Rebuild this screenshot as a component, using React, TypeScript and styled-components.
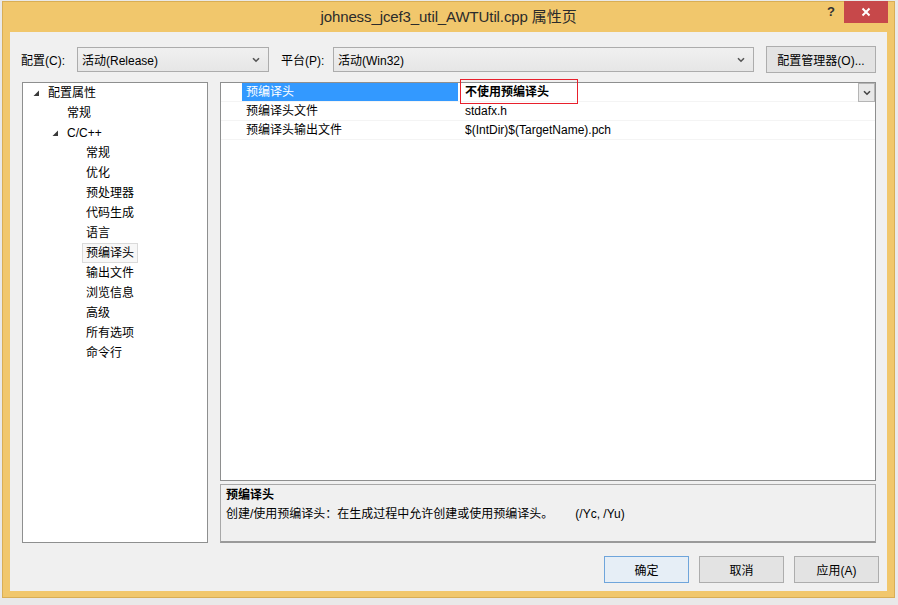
import React from "react";
import styled, { createGlobalStyle } from "styled-components";

const FONT = `"Liberation Sans", "Noto Sans CJK SC", sans-serif`;

const Global = createGlobalStyle`
  html, body { margin: 0; padding: 0; }
  body {
    width: 898px; height: 605px; overflow: hidden;
    background: #e9e9e9;
    font-family: ${FONT};
    font-size: 12px;
    color: #000;
  }
`;

const Page = styled.div`
  width: 898px;
  height: 605px;
  padding: 1px 0 0 2px;
  box-sizing: border-box;
`;

const Window = styled.div`
  width: 893px;
  height: 597px;
  background: #f1c76c;
  border: 1px solid #d9ae55;
  box-sizing: border-box;
  display: flex;
  flex-direction: column;
`;

const TitleBar = styled.div`
  height: 30px;
  flex: none;
  position: relative;
  display: flex;
  align-items: center;
  justify-content: center;
`;

const Title = styled.div`
  font-size: 15px;
  color: #2b2b2b;
  margin-top: -3px;
  letter-spacing: -0.1px;
`;

const Controls = styled.div`
  position: absolute;
  right: 6px;
  top: -1px;
  display: flex;
  align-items: flex-start;
`;

const HelpBtn = styled.div`
  width: 26px;
  height: 21px;
  display: flex;
  align-items: center;
  justify-content: center;
  font-weight: bold;
  font-size: 13px;
  color: #333;
`;

const CloseBtn = styled.div`
  width: 44px;
  height: 22px;
  background: #c7484a;
  display: flex;
  align-items: center;
  justify-content: center;
`;

const Client = styled.div`
  margin: 0 7px 6px 7px;
  flex: 1;
  background: #f0f0f0;
  display: flex;
  flex-direction: column;
  padding: 14px 11px 8px 12px;
  box-sizing: border-box;
`;

const TopRow = styled.div`
  height: 27px;
  display: flex;
  align-items: center;
  margin-left: -1px;
`;

const Label = styled.span<{ $w: number }>`
  width: ${(p) => p.$w}px;
  flex: none;
  white-space: nowrap;
`;

const Combo = styled.div<{ $w: number }>`
  width: ${(p) => p.$w}px;
  height: 25px;
  box-sizing: border-box;
  border: 1px solid #acacac;
  background: linear-gradient(#f0f0f0, #e6e6e6);
  display: flex;
  align-items: center;
  padding: 0 0 0 4px;
  flex: none;
`;

const ComboText = styled.span`
  flex: 1;
  white-space: nowrap;
`;

const Chevron = styled.svg`
  margin-right: 8px;
  flex: none;
`;

const Button = styled.div<{ $w: number; $default?: boolean }>`
  width: ${(p) => p.$w}px;
  height: 27px;
  box-sizing: border-box;
  border: 1px solid ${(p) => (p.$default ? "#6fa5db" : "#adadad")};
  background: ${(p) => (p.$default ? "#e6eef6" : "#e3e3e3")};
  display: flex;
  align-items: center;
  justify-content: center;
  flex: none;
  white-space: nowrap;
`;

const Panels = styled.div`
  margin-top: 9px;
  height: 461px;
  display: flex;
  gap: 12px;
`;

const Tree = styled.div`
  width: 186px;
  box-sizing: border-box;
  border: 1px solid #8e8f8f;
  background: #fff;
  flex: none;
`;

const TreeRow = styled.div<{ $level: number }>`
  height: 20px;
  display: flex;
  align-items: center;
  padding-left: ${(p) => 10 + p.$level * 19}px;
`;

const Expander = styled.div`
  width: 15px;
  flex: none;
  display: flex;
  align-items: center;
  padding-top: 1px;
`;

const TreeLabel = styled.span<{ $selected?: boolean }>`
  margin-left: -4px;
  height: 20px;
  line-height: 17px;
  padding: 1px 3px 0 3px;
  box-sizing: border-box;
  border: 1px solid ${(p) => (p.$selected ? "#dadada" : "transparent")};
  background: ${(p) => (p.$selected ? "#f7f7f7" : "transparent")};
  white-space: nowrap;
`;

const RightCol = styled.div`
  flex: 1;
  display: flex;
  flex-direction: column;
  gap: 3px;
  position: relative;
`;

const Grid = styled.div`
  height: 399px;
  box-sizing: border-box;
  border: 1px solid #8e8f8f;
  background: #fff;
  flex: none;
`;

const GridRow = styled.div`
  height: 19px;
  box-sizing: border-box;
  border-bottom: 1px solid #f4f4f4;
  display: flex;
  padding-left: 21px;
  line-height: 17px;
  position: relative;
`;

const NameCell = styled.div<{ $selected?: boolean }>`
  width: 216px;
  flex: none;
  padding: 1px 0 0 4px;
  box-sizing: border-box;
  background: ${(p) => (p.$selected ? "#3399ff" : "transparent")};
  color: ${(p) => (p.$selected ? "#fff" : "#000")};
  white-space: nowrap;
`;

const ValueCell = styled.div<{ $bold?: boolean }>`
  flex: 1;
  padding: 1px 0 0 7px;
  font-weight: ${(p) => (p.$bold ? "bold" : "normal")};
  white-space: nowrap;
`;

const DropBtn = styled.div`
  position: absolute;
  right: 0;
  top: 0;
  width: 17px;
  height: 19px;
  box-sizing: border-box;
  border: 1px solid #b5b5b5;
  background: #e8e8e8;
  display: flex;
  align-items: center;
  justify-content: center;
`;

const Annotation = styled.div`
  position: absolute;
  left: 240px;
  top: -3px;
  width: 118px;
  height: 25px;
  box-sizing: border-box;
  box-shadow: inset 0 0 0 1px #e8202c;
  pointer-events: none;
  z-index: 2;
`;

const Desc = styled.div`
  flex: 1;
  box-sizing: border-box;
  border: 1px solid #a8a8a8;
  border-bottom: 2px solid #9a9a9a;
  background: #f0f0f0;
  padding: 1px 5px 0 5px;
  line-height: 19px;
`;

const DescTitle = styled.div`
  font-weight: bold;
`;

const Switches = styled.span`
  margin-left: 22px;
`;

const ButtonRow = styled.div`
  margin-top: 13px;
  display: flex;
  justify-content: flex-end;
  gap: 10px;
  margin-right: -3px;
`;

const Down = () => (
  <Chevron width="8" height="6" viewBox="0 0 8 6">
    <path d="M1 1.2 L4 4.2 L7 1.2" stroke="#555" strokeWidth="1.6" fill="none" />
  </Chevron>
);

const Tri = () => (
  <svg width="7" height="7" viewBox="0 0 7 7">
    <polygon points="6,0.5 6,6 0.5,6" fill="#3a3a3a" />
  </svg>
);

const tree: { text: string; level: number; exp?: boolean; sel?: boolean }[] = [
  { text: "配置属性", level: 0, exp: true },
  { text: "常规", level: 1 },
  { text: "C/C++", level: 1, exp: true },
  { text: "常规", level: 2 },
  { text: "优化", level: 2 },
  { text: "预处理器", level: 2 },
  { text: "代码生成", level: 2 },
  { text: "语言", level: 2 },
  { text: "预编译头", level: 2, sel: true },
  { text: "输出文件", level: 2 },
  { text: "浏览信息", level: 2 },
  { text: "高级", level: 2 },
  { text: "所有选项", level: 2 },
  { text: "命令行", level: 2 },
];

export default function App() {
  return (
    <Page>
      <Global />
      <Window>
        <TitleBar>
          <Title>johness_jcef3_util_AWTUtil.cpp 属性页</Title>
          <Controls>
            <HelpBtn>?</HelpBtn>
            <CloseBtn>
              <svg width="10" height="10" viewBox="0 0 10 10">
                <path d="M1.5 1.5 L8.5 8.5 M8.5 1.5 L1.5 8.5" stroke="#fff" strokeWidth="2" />
              </svg>
            </CloseBtn>
          </Controls>
        </TitleBar>
        <Client>
          <TopRow>
            <Label $w={56}>配置(C):</Label>
            <Combo $w={192}>
              <ComboText>活动(Release)</ComboText>
              <Down />
            </Combo>
            <Label $w={52} style={{ marginLeft: 12 }}>平台(P):</Label>
            <Combo $w={421}>
              <ComboText>活动(Win32)</ComboText>
              <Down />
            </Combo>
            <Button $w={110} style={{ marginLeft: 12 }}>配置管理器(O)...</Button>
          </TopRow>
          <Panels>
            <Tree>
              {tree.map((t, i) => (
                <TreeRow key={i} $level={t.level}>
                  <Expander>{t.exp ? <Tri /> : null}</Expander>
                  <TreeLabel $selected={t.sel}>{t.text}</TreeLabel>
                </TreeRow>
              ))}
            </Tree>
            <RightCol>
              <Grid>
                <GridRow>
                  <NameCell $selected>预编译头</NameCell>
                  <ValueCell $bold>不使用预编译头</ValueCell>
                  <DropBtn>
                    <svg width="8" height="6" viewBox="0 0 8 6">
                      <path d="M1 1.2 L4 4.2 L7 1.2" stroke="#444" strokeWidth="1.6" fill="none" />
                    </svg>
                  </DropBtn>
                </GridRow>
                <GridRow>
                  <NameCell>预编译头文件</NameCell>
                  <ValueCell>stdafx.h</ValueCell>
                </GridRow>
                <GridRow>
                  <NameCell>预编译头输出文件</NameCell>
                  <ValueCell>$(IntDir)$(TargetName).pch</ValueCell>
                </GridRow>
              </Grid>
              <Desc>
                <DescTitle>预编译头</DescTitle>
                <div>
                  创建/使用预编译头：在生成过程中允许创建或使用预编译头。
                  <Switches>(/Yc, /Yu)</Switches>
                </div>
              </Desc>
              <Annotation />
            </RightCol>
          </Panels>
          <ButtonRow>
            <Button $w={85} $default>确定</Button>
            <Button $w={85}>取消</Button>
            <Button $w={85}>应用(A)</Button>
          </ButtonRow>
        </Client>
      </Window>
    </Page>
  );
}
